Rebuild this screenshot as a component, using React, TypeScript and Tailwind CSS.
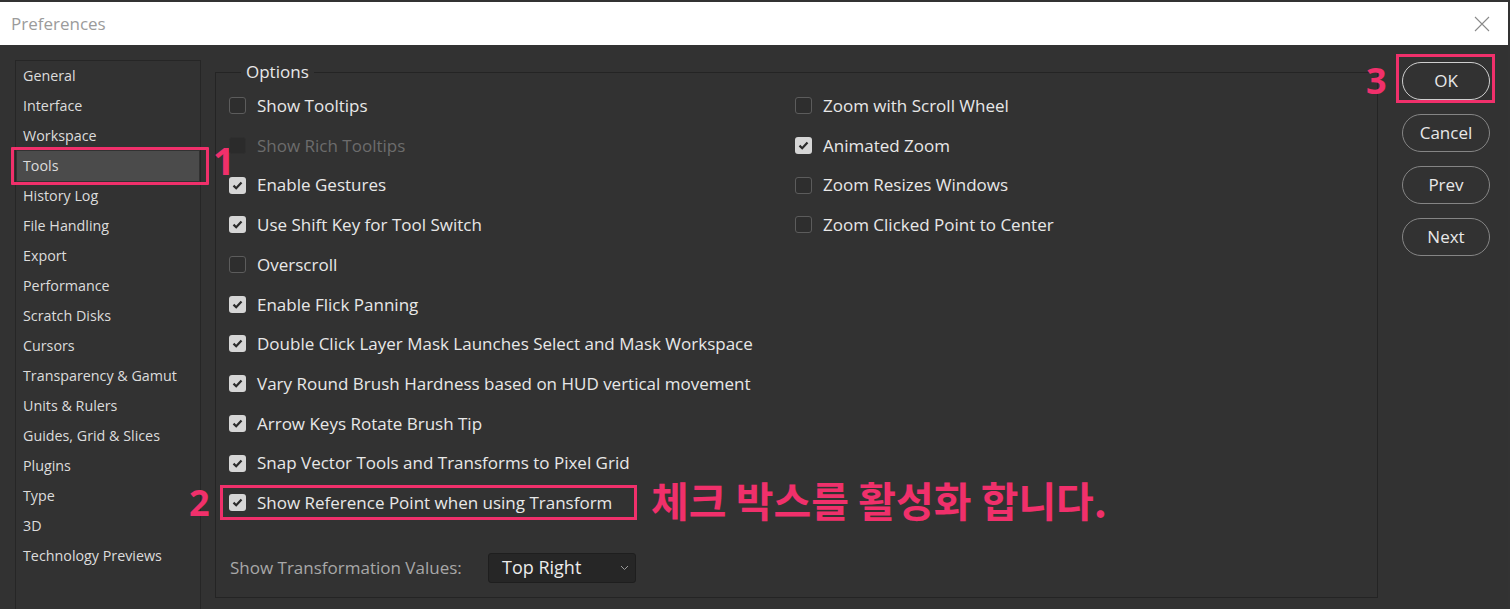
import React from "react";

const pink = "#f0306b";

const sideItems = [
  "General",
  "Interface",
  "Workspace",
  "Tools",
  "History Log",
  "File Handling",
  "Export",
  "Performance",
  "Scratch Disks",
  "Cursors",
  "Transparency & Gamut",
  "Units & Rulers",
  "Guides, Grid & Slices",
  "Plugins",
  "Type",
  "3D",
  "Technology Previews",
];

type Opt = { label: string; checked?: boolean; disabled?: boolean };

const leftOpts: Opt[] = [
  { label: "Show Tooltips" },
  { label: "Show Rich Tooltips", disabled: true },
  { label: "Enable Gestures", checked: true },
  { label: "Use Shift Key for Tool Switch", checked: true },
  { label: "Overscroll" },
  { label: "Enable Flick Panning", checked: true },
  { label: "Double Click Layer Mask Launches Select and Mask Workspace", checked: true },
  { label: "Vary Round Brush Hardness based on HUD vertical movement", checked: true },
  { label: "Arrow Keys Rotate Brush Tip", checked: true },
  { label: "Snap Vector Tools and Transforms to Pixel Grid", checked: true },
  { label: "Show Reference Point when using Transform", checked: true },
];

const rightOpts: Opt[] = [
  { label: "Zoom with Scroll Wheel" },
  { label: "Animated Zoom", checked: true },
  { label: "Zoom Resizes Windows" },
  { label: "Zoom Clicked Point to Center" },
];

const Check = ({ checked, disabled }: { checked?: boolean; disabled?: boolean }) => {
  if (disabled)
    return <span className="w-[17px] h-[17px] rounded-[3px] bg-[#2b2b2b] border border-[#2f2f2f] shrink-0" />;
  if (checked)
    return (
      <span className="w-[17px] h-[17px] rounded-[3px] bg-[#d6d6d6] flex items-center justify-center shrink-0">
        <svg width="11" height="9" viewBox="0 0 11 9">
          <path d="M1.5 4.6 L4.2 7.2 L9.5 1.6" fill="none" stroke="#2a2a2a" strokeWidth="2.2" />
        </svg>
      </span>
    );
  return <span className="w-[17px] h-[17px] rounded-[3px] border border-[#5c5c5c] bg-[#2e2e2e] shrink-0" />;
};

const Row = ({ opt, children }: { opt: Opt; children?: React.ReactNode }) => (
  <div className="relative h-[39.7px] flex items-center gap-[11px]">
    <Check checked={opt.checked} disabled={opt.disabled} />
    <span className={opt.disabled ? "text-[#6c6c6c]" : "text-[#e8e8e8]"}>{opt.label}</span>
    {children}
  </div>
);

export default function App() {
  return (
    <div
      className="w-[1510px] h-[609px] overflow-hidden bg-[#323232] border-t-2 border-r-2 border-[#333333] flex flex-col text-[17px]"
      style={{ fontFamily: "'Open Sans', 'Noto Sans', sans-serif" }}
    >
      {/* title bar */}
      <div className="h-[43px] bg-white flex items-center justify-between pl-[11px] pr-[18px] shrink-0">
        <span className="text-[#9b9b9b] text-[17px]">Preferences</span>
        <svg width="16" height="16" viewBox="0 0 16 16">
          <path d="M1 1 L15 15 M15 1 L1 15" stroke="#8a8a8a" strokeWidth="1.1" />
        </svg>
      </div>

      <div className="flex flex-1 min-h-0">
        {/* sidebar */}
        <div className="ml-[15px] mt-[15px] w-[186px] h-[600px] border border-[#262626] px-[1px] text-[14.3px] shrink-0">
          {sideItems.map((s) => (
            <div
              key={s}
              className={`relative h-[30px] flex items-center pl-[6px] text-[#dcdcdc] ${s === "Tools" ? "bg-[#4b4b4b]" : ""}`}
            >
              {s}
              {s === "Tools" && (
                <>
                  <span
                    className="absolute left-[-6px] right-[-10px] top-[-4px] bottom-[-4px] border-[3px] rounded-[1px]"
                    style={{ borderColor: pink }}
                  />
                  <span
                    className="absolute left-[196px] top-[-10px] text-[38px] font-bold leading-none"
                    style={{ color: pink }}
                  >
                    1
                  </span>
                </>
              )}
            </div>
          ))}
        </div>

        {/* options group */}
        <fieldset className="ml-[14px] mt-[16px] w-[1163px] h-[537px] border border-[#242424] pl-[13px] shrink-0">
          <legend className="ml-[12px] px-[5px] text-[#e8e8e8] text-[17px] leading-[22px]">Options</legend>
          <div className="flex mt-[3px]">
            <div className="w-[566px]">
              {leftOpts.map((o, i) => (
                <Row key={o.label} opt={o}>
                  {i === leftOpts.length - 1 && (
                    <>
                      <span
                        className="absolute left-[-9px] top-[2px] w-[417px] h-[35px] border-[3px]"
                        style={{ borderColor: pink }}
                      />
                      <span
                        className="absolute left-[-40px] top-[2px] text-[36px] font-bold leading-none"
                        style={{ color: pink }}
                      >
                        2
                      </span>
                      <span
                        className="absolute left-[422px] top-[-4px] text-[41px] font-bold whitespace-nowrap leading-none"
                        style={{ color: pink, fontFamily: "'Noto Sans CJK KR', sans-serif" }}
                      >
                        체크 박스를 활성화 합니다.
                      </span>
                    </>
                  )}
                </Row>
              ))}
            </div>
            <div>
              {rightOpts.map((o) => (
                <Row key={o.label} opt={o} />
              ))}
            </div>
          </div>
          <div className="mt-[30px] flex items-center">
            <span className="pl-[1px] w-[259px] text-[#a8a8a8]">Show Transformation Values:</span>
            <div className="w-[148px] h-[30px] rounded-[3px] bg-[#262626] border border-[#1e1e1e] flex items-center justify-between pl-[13px] pr-[6px]">
              <span className="text-[#ececec] text-[18px]">Top Right</span>
              <svg width="9" height="6" viewBox="0 0 9 6">
                <path d="M1 1 L4.5 4.5 L8 1" fill="none" stroke="#9a9a9a" strokeWidth="1" />
              </svg>
            </div>
          </div>
        </fieldset>

        {/* buttons */}
        <div className="ml-[24px] mt-[17px] flex flex-col gap-[14px] w-[88px]">
          {["OK", "Cancel", "Prev", "Next"].map((b) => (
            <div
              key={b}
              className={`relative h-[38px] rounded-full flex items-center justify-center text-[#e8e8e8] ${b === "OK" ? "border-[1.5px] border-[#cfcfcf]" : "border border-[#858585]"}`}
            >
              {b}
              {b === "OK" && (
                <>
                  <span
                    className="absolute left-[-7px] right-[-6px] top-[-9px] bottom-[-4px] border-[3px]"
                    style={{ borderColor: pink }}
                  />
                  <span
                    className="absolute left-[-37px] top-[0px] text-[36px] font-bold leading-none"
                    style={{ color: pink }}
                  >
                    3
                  </span>
                </>
              )}
            </div>
          ))}
        </div>
      </div>
    </div>
  );
}
